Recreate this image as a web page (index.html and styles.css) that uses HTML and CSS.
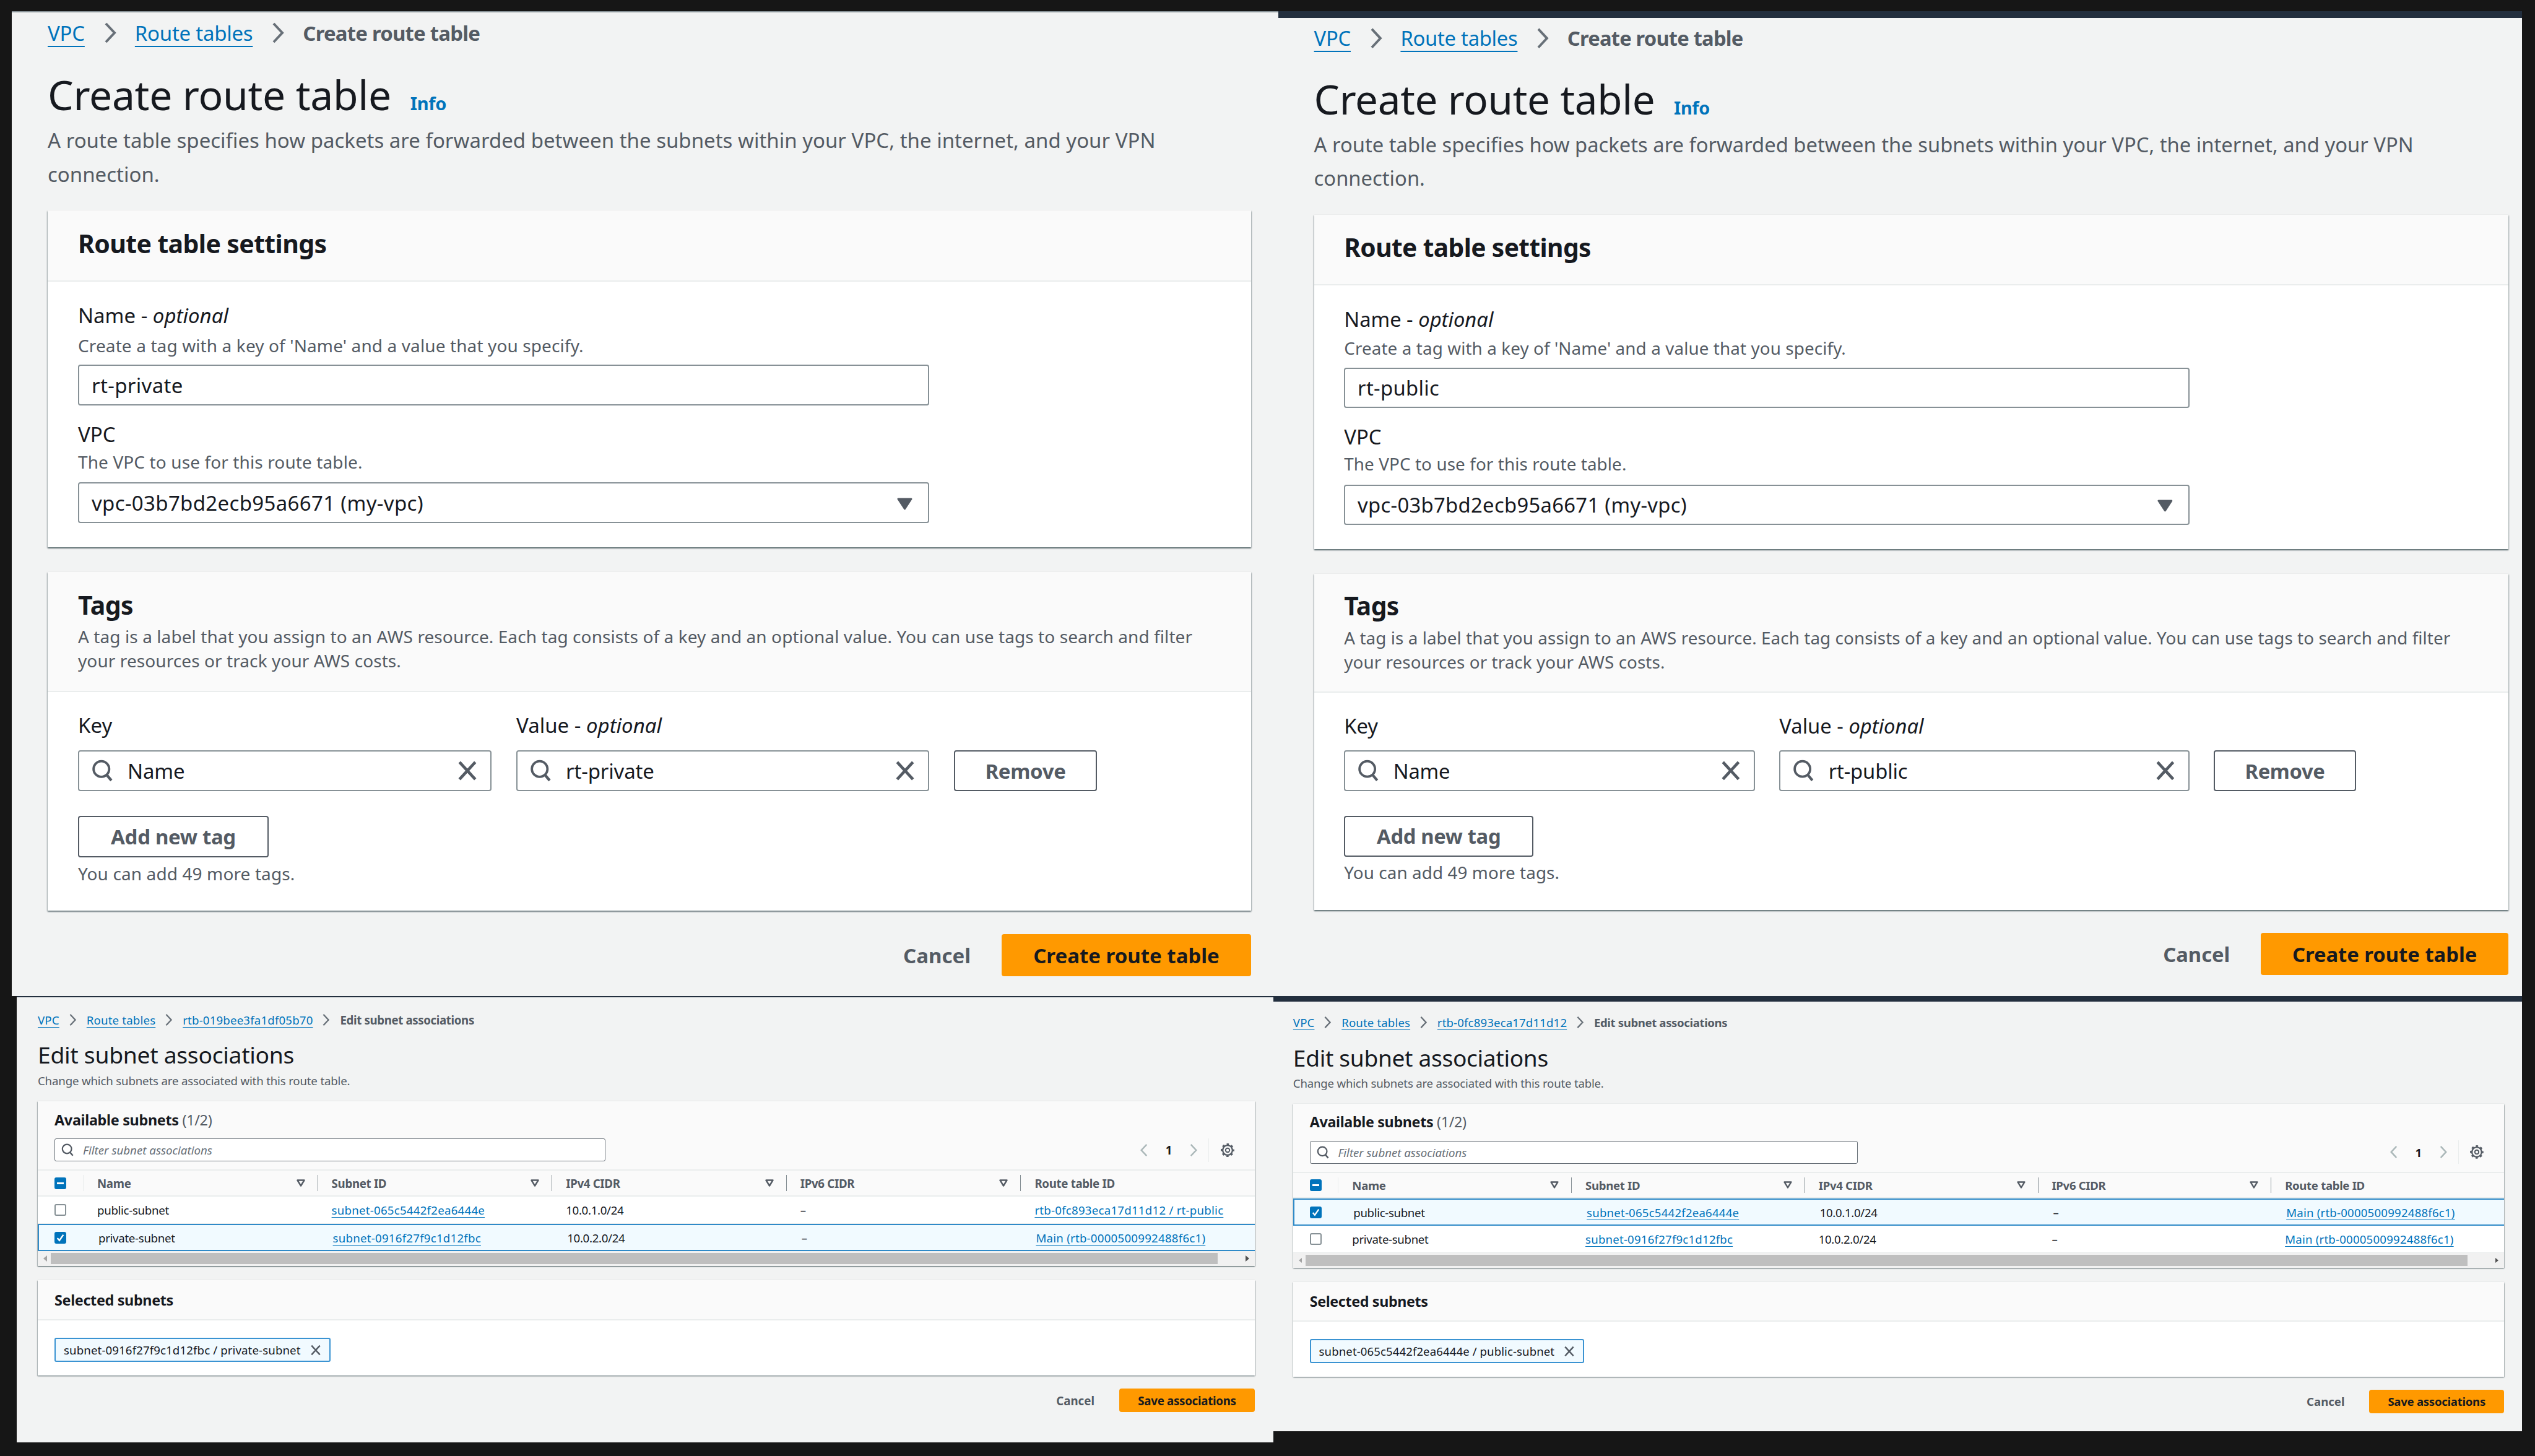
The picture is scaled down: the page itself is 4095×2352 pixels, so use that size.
FILE: index.html
```html
<!DOCTYPE html>
<html lang="en">
  <head>
    <meta charset="UTF-8" />
    <title>Route tables and subnet associations</title>
    <link rel="stylesheet" href="styles.css">
  </head>
  <body>
    <svg class="sprite" width="0" height="0">
      <symbol id="i-chevron" viewBox="0 0 22 36"><polyline points="4,3 18,18 4,33" fill="none" stroke="currentColor" stroke-width="4"/></symbol>
      <symbol id="i-search" viewBox="0 0 16 16"><circle cx="7" cy="6.8" r="5.6" fill="none" stroke="currentColor" stroke-width="1.7"/><line x1="10.8" y1="11" x2="14.2" y2="15" stroke="currentColor" stroke-width="1.9"/></symbol>
      <symbol id="i-close" viewBox="0 0 16 16"><path d="M2 1.5 14 14.5M14 1.5 2 14.5" fill="none" stroke="currentColor" stroke-width="2.2"/></symbol>
      <symbol id="i-caret" viewBox="0 0 25 20"><path d="M2 2H23L12.5 18Z" fill="currentColor" stroke="currentColor" stroke-width="3" stroke-linejoin="round"/></symbol>
      <symbol id="i-sort" viewBox="0 0 14 12"><path d="M1.5 1.5H12.5L7 10.5Z" fill="none" stroke="currentColor" stroke-width="2.4" stroke-linejoin="round"/></symbol>
      <symbol id="i-gear" viewBox="0 0 22 22"><circle cx="11" cy="11" r="7.9" fill="none" stroke="currentColor" stroke-width="2.4"/><circle cx="11" cy="11" r="9.6" fill="none" stroke="currentColor" stroke-width="2.6" stroke-dasharray="3.6 3.94" stroke-dashoffset="1.8"/><circle cx="11" cy="11" r="3.2" fill="none" stroke="currentColor" stroke-width="2"/></symbol>
      <symbol id="i-tick" viewBox="0 0 14 14"><polyline points="2.5,7.5 5.6,11 11.5,2.5" fill="none" stroke="#fff" stroke-width="2.2"/></symbol>
    </svg>

    <!-- create route table: rt-private -->
    <div class="win win-a">
      <div class="form-page">
        <nav class="crumbs">
          <a href="#">VPC</a><svg class="chev"><use href="#i-chevron"/></svg>
          <a href="#">Route tables</a><svg class="chev"><use href="#i-chevron"/></svg>
          <span>Create route table</span>
        </nav>
        <h1 class="title">Create route table <a class="info" href="#">Info</a></h1>
        <p class="lede">A route table specifies how packets are forwarded between the subnets within your VPC, the internet, and your VPN<br>connection.</p>
        <section class="card">
          <header class="card-head"><h2>Route table settings</h2></header>
          <div class="card-body">
            <div class="label">Name - <i>optional</i></div>
            <div class="hint">Create a tag with a key of 'Name' and a value that you specify.</div>
            <div class="input wide">rt-private</div>
            <div class="label second">VPC</div>
            <div class="hint">The VPC to use for this route table.</div>
            <div class="input wide">vpc-03b7bd2ecb95a6671 (my-vpc)<svg class="caret"><use href="#i-caret"/></svg></div>
          </div>
        </section>
        <section class="card">
          <header class="card-head tall">
            <h2>Tags</h2>
            <p>A tag is a label that you assign to an AWS resource. Each tag consists of a key and an optional value. You can use tags to search and filter<br>your resources or track your AWS costs.</p>
          </header>
          <div class="card-body tags">
            <div class="tag-row">
              <div class="label">Key</div>
              <div class="label">Value - <i>optional</i></div>
              <div></div>
              <div class="input search"><svg class="glass"><use href="#i-search"/></svg>Name<svg class="clear"><use href="#i-close"/></svg></div>
              <div class="input search"><svg class="glass"><use href="#i-search"/></svg>rt-private<svg class="clear"><use href="#i-close"/></svg></div>
              <button class="btn">Remove</button>
            </div>
            <button class="btn add">Add new tag</button>
            <div class="hint">You can add 49 more tags.</div>
          </div>
        </section>
        <footer class="actions">
          <span class="cancel">Cancel</span>
          <button class="btn primary">Create route table</button>
        </footer>
      </div>
    </div>

    <!-- create route table: rt-public -->
    <div class="win win-b">
      <div class="form-page">
        <nav class="crumbs">
          <a href="#">VPC</a><svg class="chev"><use href="#i-chevron"/></svg>
          <a href="#">Route tables</a><svg class="chev"><use href="#i-chevron"/></svg>
          <span>Create route table</span>
        </nav>
        <h1 class="title">Create route table <a class="info" href="#">Info</a></h1>
        <p class="lede">A route table specifies how packets are forwarded between the subnets within your VPC, the internet, and your VPN<br>connection.</p>
        <section class="card">
          <header class="card-head"><h2>Route table settings</h2></header>
          <div class="card-body">
            <div class="label">Name - <i>optional</i></div>
            <div class="hint">Create a tag with a key of 'Name' and a value that you specify.</div>
            <div class="input wide">rt-public</div>
            <div class="label second">VPC</div>
            <div class="hint">The VPC to use for this route table.</div>
            <div class="input wide">vpc-03b7bd2ecb95a6671 (my-vpc)<svg class="caret"><use href="#i-caret"/></svg></div>
          </div>
        </section>
        <section class="card">
          <header class="card-head tall">
            <h2>Tags</h2>
            <p>A tag is a label that you assign to an AWS resource. Each tag consists of a key and an optional value. You can use tags to search and filter<br>your resources or track your AWS costs.</p>
          </header>
          <div class="card-body tags">
            <div class="tag-row">
              <div class="label">Key</div>
              <div class="label">Value - <i>optional</i></div>
              <div></div>
              <div class="input search"><svg class="glass"><use href="#i-search"/></svg>Name<svg class="clear"><use href="#i-close"/></svg></div>
              <div class="input search"><svg class="glass"><use href="#i-search"/></svg>rt-public<svg class="clear"><use href="#i-close"/></svg></div>
              <button class="btn">Remove</button>
            </div>
            <button class="btn add">Add new tag</button>
            <div class="hint">You can add 49 more tags.</div>
          </div>
        </section>
        <footer class="actions">
          <span class="cancel">Cancel</span>
          <button class="btn primary">Create route table</button>
        </footer>
      </div>
    </div>

    <!-- edit subnet associations: private -->
    <div class="win win-c">
      <div class="assoc-page">
        <nav class="crumbs small">
          <a href="#">VPC</a><svg class="chev"><use href="#i-chevron"/></svg>
          <a href="#">Route tables</a><svg class="chev"><use href="#i-chevron"/></svg>
          <a href="#">rtb-019bee3fa1df05b70</a><svg class="chev"><use href="#i-chevron"/></svg>
          <span>Edit subnet associations</span>
        </nav>
        <h1 class="title small">Edit subnet associations</h1>
        <p class="lede small">Change which subnets are associated with this route table.</p>
        <section class="card">
          <div class="toolbar">
            <h2>Available subnets <span class="count">(1/2)</span></h2>
            <div class="toolbar-row">
              <div class="filter"><svg class="glass"><use href="#i-search"/></svg><i>Filter subnet associations</i></div>
              <div class="pager">
                <svg class="pg-prev"><use href="#i-chevron"/></svg>
                <b>1</b>
                <svg class="pg-next"><use href="#i-chevron"/></svg>
                <span class="pg-sep"></span>
                <svg class="gear"><use href="#i-gear"/></svg>
              </div>
            </div>
          </div>
          <div class="row head">
            <div class="cell check"><span class="box on"><i class="dash"></i></span></div>
            <div class="cell">Name<svg class="sort"><use href="#i-sort"/></svg></div>
            <div class="cell">Subnet ID<svg class="sort"><use href="#i-sort"/></svg></div>
            <div class="cell">IPv4 CIDR<svg class="sort"><use href="#i-sort"/></svg></div>
            <div class="cell">IPv6 CIDR<svg class="sort"><use href="#i-sort"/></svg></div>
            <div class="cell last">Route table ID</div>
          </div>
          <div class="row">
            <div class="cell check"><span class="box"></span></div>
            <div class="cell">public-subnet</div>
            <div class="cell"><a href="#">subnet-065c5442f2ea6444e</a></div>
            <div class="cell">10.0.1.0/24</div>
            <div class="cell">–</div>
            <div class="cell"><a href="#">rtb-0fc893eca17d11d12 / rt-public</a></div>
          </div>
          <div class="row picked">
            <div class="cell check"><span class="box on"><svg><use href="#i-tick"/></svg></span></div>
            <div class="cell">private-subnet</div>
            <div class="cell"><a href="#">subnet-0916f27f9c1d12fbc</a></div>
            <div class="cell">10.0.2.0/24</div>
            <div class="cell">–</div>
            <div class="cell"><a href="#">Main (rtb-0000500992488f6c1)</a></div>
          </div>
          <div class="scrollbar"><i class="arrow left"></i><span class="thumb"></span><i class="arrow right"></i></div>
        </section>
        <section class="card">
          <header class="card-head compact"><h2>Selected subnets</h2></header>
          <div class="chips">
            <span class="chip">subnet-0916f27f9c1d12fbc / private-subnet<svg><use href="#i-close"/></svg></span>
          </div>
        </section>
        <footer class="actions small">
          <span class="cancel">Cancel</span>
          <button class="btn primary">Save associations</button>
        </footer>
      </div>
    </div>

    <!-- edit subnet associations: public -->
    <div class="win win-d">
      <div class="assoc-page">
        <nav class="crumbs small">
          <a href="#">VPC</a><svg class="chev"><use href="#i-chevron"/></svg>
          <a href="#">Route tables</a><svg class="chev"><use href="#i-chevron"/></svg>
          <a href="#">rtb-0fc893eca17d11d12</a><svg class="chev"><use href="#i-chevron"/></svg>
          <span>Edit subnet associations</span>
        </nav>
        <h1 class="title small">Edit subnet associations</h1>
        <p class="lede small">Change which subnets are associated with this route table.</p>
        <section class="card">
          <div class="toolbar">
            <h2>Available subnets <span class="count">(1/2)</span></h2>
            <div class="toolbar-row">
              <div class="filter"><svg class="glass"><use href="#i-search"/></svg><i>Filter subnet associations</i></div>
              <div class="pager">
                <svg class="pg-prev"><use href="#i-chevron"/></svg>
                <b>1</b>
                <svg class="pg-next"><use href="#i-chevron"/></svg>
                <span class="pg-sep"></span>
                <svg class="gear"><use href="#i-gear"/></svg>
              </div>
            </div>
          </div>
          <div class="row head">
            <div class="cell check"><span class="box on"><i class="dash"></i></span></div>
            <div class="cell">Name<svg class="sort"><use href="#i-sort"/></svg></div>
            <div class="cell">Subnet ID<svg class="sort"><use href="#i-sort"/></svg></div>
            <div class="cell">IPv4 CIDR<svg class="sort"><use href="#i-sort"/></svg></div>
            <div class="cell">IPv6 CIDR<svg class="sort"><use href="#i-sort"/></svg></div>
            <div class="cell last">Route table ID</div>
          </div>
          <div class="row picked">
            <div class="cell check"><span class="box on"><svg><use href="#i-tick"/></svg></span></div>
            <div class="cell">public-subnet</div>
            <div class="cell"><a href="#">subnet-065c5442f2ea6444e</a></div>
            <div class="cell">10.0.1.0/24</div>
            <div class="cell">–</div>
            <div class="cell"><a href="#">Main (rtb-0000500992488f6c1)</a></div>
          </div>
          <div class="row">
            <div class="cell check"><span class="box"></span></div>
            <div class="cell">private-subnet</div>
            <div class="cell"><a href="#">subnet-0916f27f9c1d12fbc</a></div>
            <div class="cell">10.0.2.0/24</div>
            <div class="cell">–</div>
            <div class="cell"><a href="#">Main (rtb-0000500992488f6c1)</a></div>
          </div>
          <div class="scrollbar"><i class="arrow left"></i><span class="thumb"></span><i class="arrow right"></i></div>
        </section>
        <section class="card">
          <header class="card-head compact"><h2>Selected subnets</h2></header>
          <div class="chips">
            <span class="chip">subnet-065c5442f2ea6444e / public-subnet<svg><use href="#i-close"/></svg></span>
          </div>
        </section>
        <footer class="actions small">
          <span class="cancel">Cancel</span>
          <button class="btn primary">Save associations</button>
        </footer>
      </div>
    </div>
  </body>
</html>
```

FILE: styles.css
```css
* {
  box-sizing: border-box;
}

html,
body {
  margin: 0;
  height: 100%;
}

body {
  position: relative;
  overflow: hidden;
  background: #161616;
  color: #16191f;
  font-family: "Noto Sans", "Liberation Sans", sans-serif;
  letter-spacing: -0.02em;
}

h1,
h2,
p {
  margin: 0;
}

a {
  color: #0073bb;
  text-decoration: none;
}

.sprite {
  position: absolute;
}

/* the four screenshots, each one a window on the dark sheet */
.win {
  position: absolute;
  overflow: hidden;
  background: #f2f3f3;
  border-top: 2px solid #232f3e;
}

.win-a {
  left: 19px;
  top: 18px;
  width: 2046px;
  height: 1591px;
  border-top-color: #879196;
}

.win-b {
  left: 2065px;
  top: 18px;
  width: 2009px;
  height: 1591px;
  border-top-width: 11px;
}

.win-c {
  left: 27px;
  top: 1609px;
  width: 2030px;
  height: 721px;
}

.win-d {
  left: 2057px;
  top: 1609px;
  width: 2017px;
  height: 703px;
  border-top-width: 9px;
}

/* breadcrumbs */
.crumbs {
  display: flex;
  align-items: center;
  height: 46px;
  color: #545b64;
  font-size: 33px;
  font-weight: 700;
  letter-spacing: -0.025em;
}

.crumbs a {
  font-weight: 400;
  letter-spacing: -0.008em;
  text-decoration: underline;
  text-decoration-thickness: 0.07em;
  text-underline-offset: 0.24em;
}

.chev {
  flex: none;
  width: 22px;
  height: 36px;
  margin: 0 29px 0 30px;
  color: #687078;
}

.crumbs.small {
  height: 26px;
  font-size: 18.7px;
  letter-spacing: -0.02em;
}

.crumbs.small a {
  letter-spacing: 0.008em;
}

.crumbs.small .chev {
  width: 13px;
  height: 21px;
  margin: 0 16px 0 15px;
}

/* page heading */
.title {
  height: 80px;
  margin-top: 36px;
  font-size: 66px;
  font-weight: 400;
  line-height: 80px;
}

.info {
  margin-left: 14px;
  font-size: 29px;
  font-weight: 700;
}

.lede {
  margin-top: 7px;
  color: #545b64;
  font-size: 33px;
  letter-spacing: 0;
  line-height: 55px;
}

.title.small {
  height: 44px;
  margin-top: 22px;
  font-size: 37.3px;
  line-height: 44px;
}

.lede.small {
  margin-top: 6px;
  font-size: 18.7px;
  letter-spacing: -0.01em;
  line-height: 28px;
}

/* create route table page */
.form-page {
  padding: 10px 44px 0 58px;
}

.win-b .form-page {
  zoom: 0.993;
  padding: 10px 22px 0 58px;
}

.card {
  margin-top: 31px;
  background: #fff;
  box-shadow: 0 2px 2px 0 rgba(0, 28, 36, 0.45), 1px 1px 2px 0 rgba(0, 28, 36, 0.2), -1px 1px 2px 0 rgba(0, 28, 36, 0.2);
}

.card + .card {
  margin-top: 40px;
}

.card-head {
  height: 115px;
  padding: 27px 49px 0;
  background: #fafafa;
  border-bottom: 2.1px solid #eaeded;
}

.card-head h2 {
  font-size: 41px;
  font-weight: 700;
  letter-spacing: -0.015em;
  line-height: 52px;
}

.card-head.tall {
  height: 194px;
}

.card-head p {
  margin-top: 6px;
  color: #545b64;
  font-size: 28px;
  letter-spacing: 0.003em;
  line-height: 39px;
}

.card-body {
  padding: 33px 49px 39px;
}

.card-body.tags {
  padding: 32px 49px 41px;
}

.label {
  font-size: 33px;
  letter-spacing: 0;
  line-height: 44px;
}

.label.second {
  margin-top: 25px;
}

.hint {
  margin-top: 7px;
  color: #545b64;
  font-size: 28px;
  letter-spacing: 0.004em;
  line-height: 38px;
}

.second + .hint {
  margin-top: 3px;
}

.input {
  display: flex;
  align-items: center;
  height: 66px;
  padding: 0 20px;
  background: #fff;
  border: 2.1px solid #879196;
  border-radius: 4px;
  font-size: 33px;
  letter-spacing: 0.01em;
}

.input.search {
  letter-spacing: -0.005em;
}

.input.wide {
  width: 1375px;
  margin-top: 12px;
}

.second + .hint + .input.wide {
  margin-top: 14px;
}

.caret {
  width: 25px;
  height: 20px;
  margin: 3px 5px 0 auto;
  color: #545b64;
}

.tag-row {
  display: grid;
  grid-template-columns: 668px 667px 231px;
  column-gap: 40px;
  row-gap: 18px;
}

.glass {
  flex: none;
  width: 36px;
  height: 36px;
  margin-right: 22px;
  color: #545b64;
}

.clear {
  flex: none;
  width: 34px;
  height: 34px;
  margin-left: auto;
  color: #545b64;
}

.btn {
  height: 66px;
  padding: 0;
  background: #fff;
  border: 2.1px solid #545b64;
  border-radius: 4px;
  color: #545b64;
  font-family: inherit;
  font-size: 33px;
  font-weight: 700;
  letter-spacing: -0.01em;
}

.btn.add {
  display: block;
  width: 308px;
  height: 67px;
  margin-top: 40px;
}

.btn.primary {
  width: 403px;
  height: 68px;
  background: #f90;
  border-color: #f90;
  color: #16191f;
  letter-spacing: 0;
}

.actions {
  display: flex;
  align-items: center;
  justify-content: flex-end;
  gap: 50px;
  margin-top: 38px;
}

.cancel {
  color: #545b64;
  font-size: 33px;
  font-weight: 700;
  letter-spacing: 0;
}

/* edit subnet associations page */
.assoc-page {
  padding: 23px 30px 0 34px;
}

.win-d .assoc-page {
  zoom: 0.995;
  padding: 21px 29px 0 32px;
}

.assoc-page .card {
  margin-top: 19px;
  box-shadow: 0 1px 2px 0 rgba(0, 28, 36, 0.5), 1px 1px 1px 0 rgba(0, 28, 36, 0.15), -1px 1px 1px 0 rgba(0, 28, 36, 0.15);
}

.assoc-page .card + .card {
  margin-top: 23px;
}

.toolbar {
  height: 112px;
  padding: 15px 27px 0;
  background: #fafafa;
  border-bottom: 2.1px solid #eaeded;
}

.toolbar h2,
.card-head.compact h2 {
  font-size: 23.4px;
  line-height: 30px;
}

.count {
  color: #545b64;
  font-weight: 400;
}

.toolbar-row {
  display: flex;
  align-items: center;
  margin-top: 15px;
}

.filter {
  display: flex;
  align-items: center;
  width: 890px;
  height: 37px;
  padding: 0 10px;
  background: #fff;
  border: 1px solid #687078;
  border-radius: 3px;
  color: #687078;
  font-size: 18.7px;
  letter-spacing: 0;
}

.filter .glass {
  width: 21px;
  height: 21px;
  margin-right: 14px;
}

.pager {
  display: flex;
  align-items: center;
  margin-left: auto;
  height: 37px;
  font-size: 18.7px;
}

.pg-prev,
.pg-next {
  width: 14px;
  height: 22px;
  color: #aab7b8;
}

.pg-prev {
  transform: scaleX(-1);
}

.pager b {
  margin: 0 28px;
}

.pg-sep {
  width: 1px;
  height: 38px;
  margin: 0 19px 0 17px;
  background: #eaeded;
}

.gear {
  width: 22px;
  height: 22px;
  margin-right: 6px;
  color: #545b64;
}

.row {
  display: grid;
  grid-template-columns: 74px repeat(5, 378.6px);
  align-items: center;
  height: 44px;
  font-size: 18.7px;
  border-bottom: 1px solid #eaeded;
}

.row.head {
  height: 42px;
  background: #fafafa;
  color: #545b64;
  font-weight: 700;
  border-bottom: 2.1px solid #eaeded;
}

.row.picked {
  background: #f1faff;
  border: 2.1px solid #2f8ac8;
  border-right: 0;
}

.row a {
  letter-spacing: 0.012em;
  text-decoration: underline;
  text-decoration-thickness: 0.07em;
  text-underline-offset: 0.22em;
}

.cell {
  display: flex;
  align-items: center;
  height: 100%;
  padding-left: 22px;
  position: relative;
}

.cell.check {
  padding-left: 27px;
}

.picked .cell.check {
  padding-left: 25px;
}

.head .cell::after {
  content: "";
  position: absolute;
  right: 0;
  top: 7px;
  bottom: 7px;
  width: 1px;
  background: #879196;
}

.head .cell.check::after {
  background: #eaeded;
}

.head .cell.last::after {
  display: none;
}

.sort {
  width: 14px;
  height: 12px;
  margin-left: auto;
  margin-right: 21px;
  color: #545b64;
}

.box {
  display: flex;
  align-items: center;
  justify-content: center;
  width: 19px;
  height: 19px;
  background: #fff;
  border: 2.1px solid #879196;
  border-radius: 3px;
}

.box.on {
  background: #0073bb;
  border-color: #0073bb;
}

.box svg {
  width: 15px;
  height: 15px;
}

.dash {
  width: 11px;
  height: 3px;
  background: #fff;
}

.scrollbar {
  display: flex;
  align-items: center;
  height: 24px;
  background: #f1f1f1;
}

.thumb {
  flex: 1;
  height: 18px;
  margin: 0 45px 0 6px;
  background: #bfbfbf;
}

.arrow {
  width: 0;
  height: 0;
  border-top: 5px solid transparent;
  border-bottom: 5px solid transparent;
}

.arrow.left {
  margin-left: 9px;
  border-right: 6px solid #a3a3a3;
}

.arrow.right {
  margin-right: 9px;
  border-left: 6px solid #505050;
}

.card-head.compact {
  height: 65px;
  padding: 17px 27px 0;
}

.chips {
  display: flex;
  padding: 28px 27px 22px;
}

.chip {
  display: flex;
  align-items: center;
  height: 39px;
  padding: 0 13px;
  background: #f1faff;
  border: 2.1px solid #3a93d2;
  border-radius: 3px;
  font-size: 18.7px;
  letter-spacing: 0.005em;
}

.chip svg {
  width: 18px;
  height: 18px;
  margin-left: 15px;
  color: #545b64;
}

.actions.small {
  gap: 40px;
  margin-top: 21px;
}

.actions.small .cancel {
  font-size: 18.7px;
}

.actions.small .btn.primary {
  width: 219px;
  height: 38px;
  font-size: 18.7px;
  letter-spacing: -0.015em;
}
```
